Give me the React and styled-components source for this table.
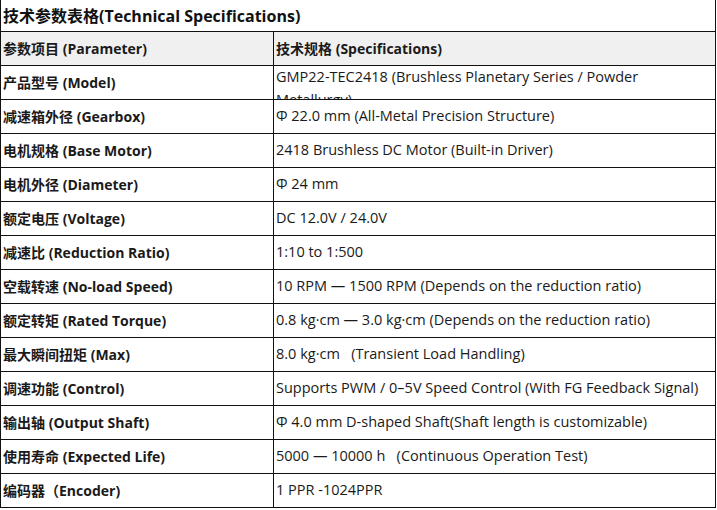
import React from 'react'
import styled, {createGlobalStyle} from 'styled-components'

const GlobalStyle=createGlobalStyle`
  body{
    margin:0;
    background:#fff;
    font-family:"Open Sans","Noto Sans CJK SC",sans-serif;
    color:#1a1a1a;
  }
`

const specs=[
  {label:'产品型号 (Model)',value:'GMP22-TEC2418 (Brushless Planetary Series / Powder Metallurgy)',clip:true},
  {label:'减速箱外径 (Gearbox)',value:'Φ 22.0 mm (All-Metal Precision Structure)'},
  {label:'电机规格 (Base Motor)',value:'2418 Brushless DC Motor (Built-in Driver)'},
  {label:'电机外径 (Diameter)',value:'Φ 24 mm'},
  {label:'额定电压 (Voltage)',value:'DC 12.0V / 24.0V'},
  {label:'减速比 (Reduction Ratio)',value:'1:10 to 1:500'},
  {label:'空载转速 (No-load Speed)',value:'10 RPM — 1500 RPM (Depends on the reduction ratio)'},
  {label:'额定转矩 (Rated Torque)',value:'0.8 kg·cm — 3.0 kg·cm (Depends on the reduction ratio)'},
  {label:'最大瞬间扭矩 (Max)',value:'8.0 kg·cm\u00a0\u00a0\u00a0(Transient Load Handling)'},
  {label:'调速功能 (Control)',value:'Supports PWM / 0–5V Speed Control (With FG Feedback Signal)'},
  {label:'输出轴 (Output Shaft)',value:'Φ 4.0 mm D-shaped Shaft(Shaft length is customizable)'},
  {label:'使用寿命 (Expected Life)',value:'5000 — 10000 h\u00a0\u00a0\u00a0(Continuous Operation Test)'},
  {label:'编码器（Encoder)',value:'1 PPR -1024PPR'},
]

export default function App() {
  return (
    <>
      <GlobalStyle />
      <Table>
        <Title>技术参数表格(Technical Specifications)</Title>
        <Row head>
          <Cell label>参数项目 (Parameter)</Cell>
          <Cell label>技术规格 (Specifications)</Cell>
        </Row>
        {specs.map(s=>(
          <Row key={s.label}>
            <Cell label>{s.label}</Cell>
            <Cell clip={s.clip}>
              {s.clip ? <Wrap>{s.value}</Wrap> : s.value}
            </Cell>
          </Row>
        ))}
      </Table>
    </>
  )
}

const Table=styled.div`
  width:716px;
  box-sizing:border-box;
  border-left:1px solid #111;
  border-right:1px solid #111;
`

const Title=styled.div`
  height:32px;
  box-sizing:border-box;
  padding:0 0 2px 2px;
  border-bottom:1px solid #111;
  display:flex;
  align-items:center;
  font-size:16px;
  font-weight:700;
  color:#111;
  white-space:nowrap;
`

const Row=styled.div.withConfig({shouldForwardProp:p=>p!=='head'})`
  display:grid;
  grid-template-columns:273px 1fr;
  height:34px;
  box-sizing:border-box;
  border-bottom:1px solid #111;
  background:${p=>p.head ? '#f0f0f0' : '#fff'};
`

const Cell=styled.div.withConfig({shouldForwardProp:p=>p!=='label' && p!=='clip'})`
  display:flex;
  align-items:${p=>p.clip ? 'flex-start' : 'center'};
  overflow:hidden;
  box-sizing:border-box;
  padding:0 0 ${p=>p.clip ? 0 : 2}px 2px;
  font-size:${p=>p.label ? '14px' : '14.5px'};
  font-weight:${p=>p.label ? 700 : 400};
  white-space:${p=>p.clip ? 'normal' : 'nowrap'};
  &:first-child{
    border-right:1px solid #111;
  }
`

const Wrap=styled.div`
  line-height:23px;
  max-width:370px;
  margin-top:-1px;
`
